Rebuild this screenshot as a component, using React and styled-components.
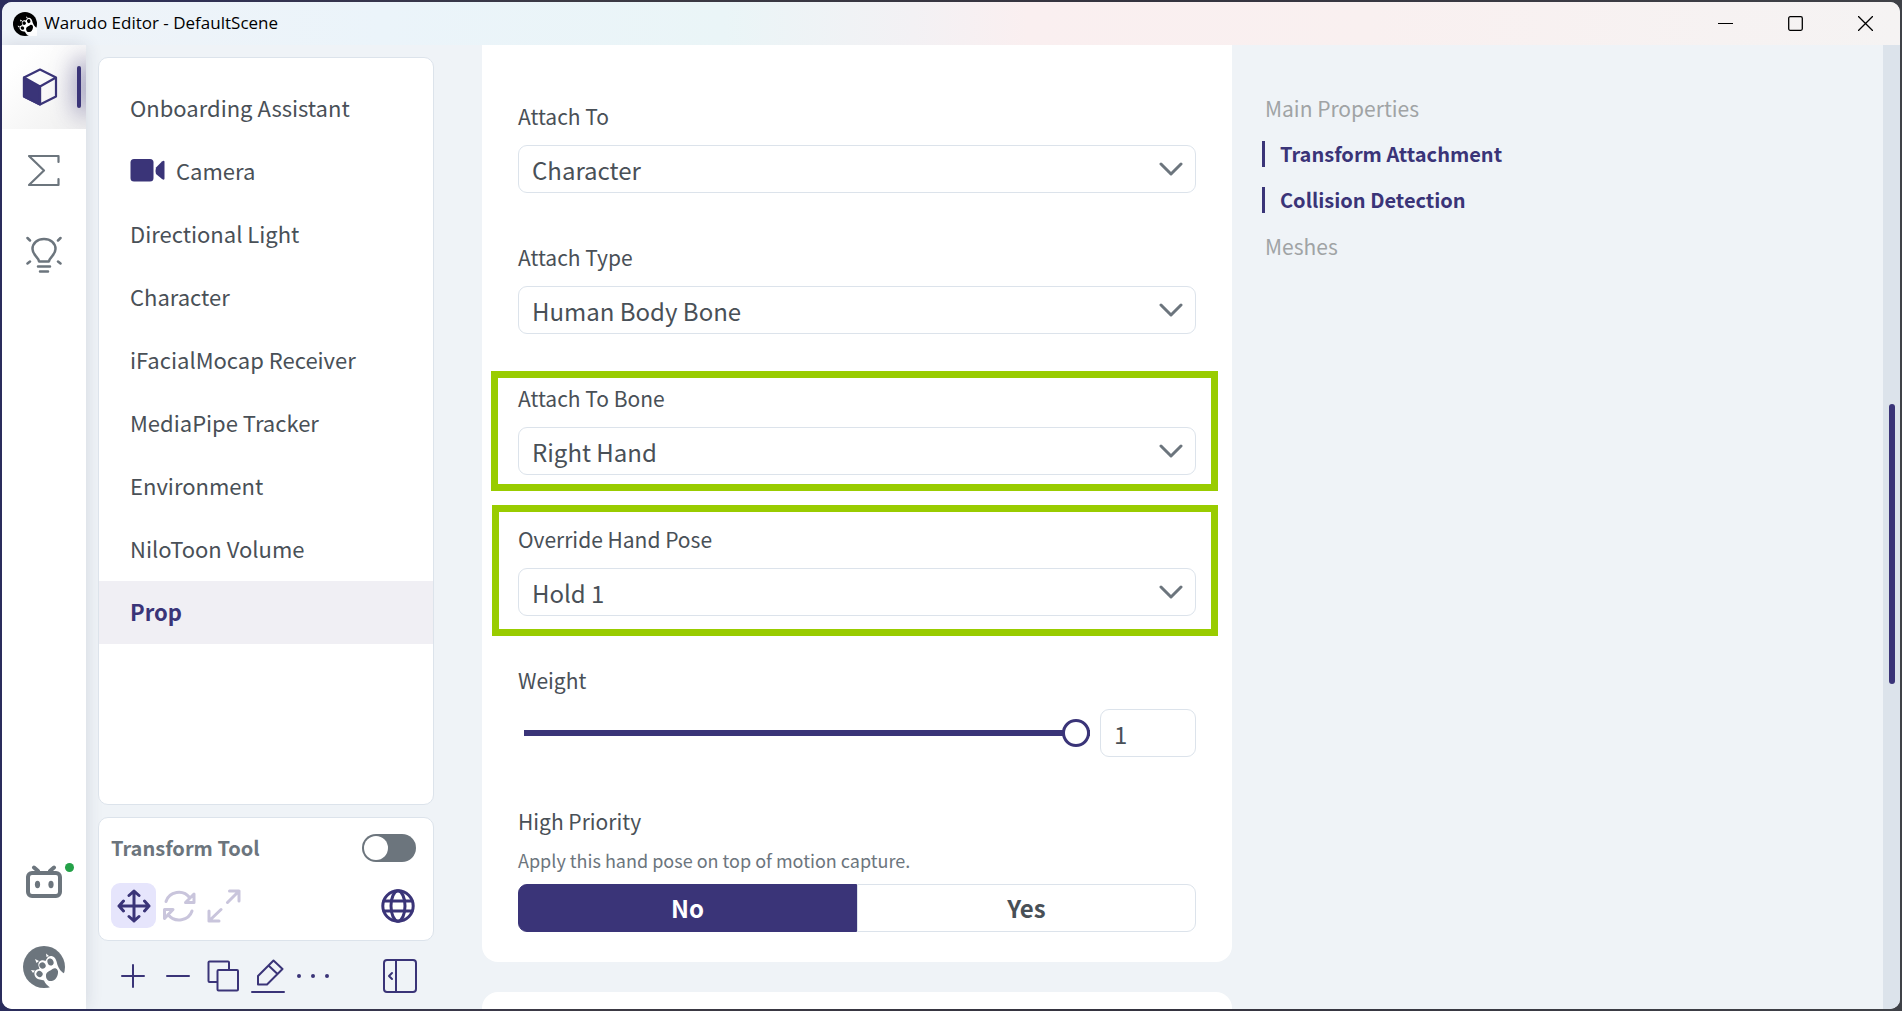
import { useState } from 'react';
import styled, { createGlobalStyle, css } from 'styled-components';

const COLORS = {
  primary: '#3a3478',
  text: '#495057',
  gray: '#6c757d',
  muted: '#a0a3a5',
  border: '#dce3eb',
  background: '#eff3f7',
  disabled: '#c9c5dc',
  highlight: '#99cc00',
};

const ASSETS = [
  { id: 'onboarding', name: 'Onboarding Assistant' },
  { id: 'camera', name: 'Camera', camera: true },
  { id: 'light', name: 'Directional Light' },
  { id: 'character', name: 'Character' },
  { id: 'ifacialmocap', name: 'iFacialMocap Receiver' },
  { id: 'mediapipe', name: 'MediaPipe Tracker' },
  { id: 'environment', name: 'Environment' },
  { id: 'nilotoon', name: 'NiloToon Volume' },
  { id: 'prop', name: 'Prop' },
];

const SECTIONS = [
  { id: 'main', name: 'Main Properties' },
  { id: 'transform', name: 'Transform Attachment', active: true },
  { id: 'collision', name: 'Collision Detection', active: true },
  { id: 'meshes', name: 'Meshes' },
];

const PawLogo = ({ size, color }) => (
  <svg width={size} height={size} viewBox="0 0 42 42" aria-hidden="true">
    <circle cx="21" cy="21" r="21" fill={color} />
    <path
      d="M42 28 C38 26 36 23 34.500 19 C33.500 15 33 11 28.500 10 C25 9.500 23.500 13 22.500 15 C19 13 14.500 15 15.500 20 L16.500 23 C12 23 10 27 12.500 31 C14.500 34 19 33.500 21 34.500 C22 38 25 40 28 42 L42 42 Z"
      fill="#fff"
    />
    <g fill={color}>
      <ellipse cx="27.500" cy="16" rx="3" ry="3.600" transform="rotate(-20 27.500 16)" />
      <ellipse cx="19.500" cy="19.500" rx="3" ry="3.300" transform="rotate(-40 19.500 19.500)" />
      <ellipse cx="16.500" cy="28" rx="3" ry="3.200" transform="rotate(-50 16.500 28)" />
      <path d="M23 30 C22.500 26 27 25 29.500 23 C33 21 35.500 24 35 27 C34.500 31 32 35 28.500 35 C25 35.500 23 33 23 30 Z" />
    </g>
    <path d="M8 24 L12 24.500 L10 27 Z M12 13 L16 15 L13.500 17 Z M23 7.500 L26 10 L23.500 11 Z" fill="#fff" />
  </svg>
);

const CubeIcon = () => (
  <svg width="36" height="40" viewBox="0 0 36 40" fill="none" stroke={COLORS.primary} strokeWidth="2.200" strokeLinejoin="round" aria-hidden="true">
    <path d="M18 2.500 L34 10.500 V29.500 L18 37.500 L2 29.500 V10.500 Z M18 19.500 L34 10.500 M18 19.500 V37.500" />
    <path d="M2 10.500 L18 19.500 V37.500 L2 29.500 Z" fill={COLORS.primary} />
  </svg>
);

const SigmaIcon = () => (
  <svg width="36" height="36" viewBox="0 0 36 36" fill="none" stroke={COLORS.gray} strokeWidth="2.200" strokeLinecap="round" strokeLinejoin="round" aria-hidden="true">
    <path d="M32.500 9 V3 H3 L18 17.500 L3 32 H32.500 V26" />
  </svg>
);

const BulbIcon = () => (
  <svg width="36" height="38" viewBox="0 0 36 38" fill="none" stroke={COLORS.gray} strokeWidth="2.500" strokeLinecap="round" strokeLinejoin="round" aria-hidden="true">
    <path d="M13 25.500 C12.500 20.500 6.500 19.500 6.500 13 C6.500 7 11.500 3 18 3 S29.500 7 29.500 13 C29.500 19.500 23.500 20.500 23 25.500 Z" />
    <path d="M12 30.500 H24 M14 35.500 H22 M1.500 2 L4 4.500 M34.500 2 L32 4.500 M1.500 27.500 L4 25.500 M34.500 27.500 L32 25.500" />
  </svg>
);

const BotIcon = () => (
  <svg width="38" height="36" viewBox="0 0 38 36" fill="none" stroke={COLORS.gray} strokeWidth="4" strokeLinecap="round" aria-hidden="true">
    <rect x="3" y="8" width="32" height="23" rx="4" />
    <path d="M9 2.500 L13 6 M29 2.500 L25 6" />
    <g fill={COLORS.gray} stroke="none">
      <ellipse cx="12.500" cy="19.500" rx="2.600" ry="3.700" />
      <ellipse cx="26" cy="19.500" rx="2.600" ry="3.700" />
    </g>
  </svg>
);

const CameraIcon = () => (
  <svg width="35" height="24" viewBox="0 0 35 24" fill={COLORS.primary} aria-hidden="true">
    <rect x="0.500" y="1" width="23" height="22.500" rx="3.500" />
    <path d="M26 9.500 L32 3.500 Q34.500 2 34.500 4 V20.500 Q34.500 22.500 32 21 L26 16 Q25 13 26 9.500 Z" />
  </svg>
);

const Stroked = ({ children, width = 3, size = 34 }) => (
  <svg width={size} height={size} viewBox="0 0 34 34" fill="none" stroke="currentColor" strokeWidth={width} strokeLinecap="round" strokeLinejoin="round" aria-hidden="true">
    {children}
  </svg>
);

const App = () => {
  const [asset, setAsset] = useState('prop');
  const [priority, setPriority] = useState('no');
  const [weight, setWeight] = useState(1);

  return (
    <>
      <GlobalStyle />
      <Desktop>
        <Window>
          <TitleBar>
            <PawLogo size={24} color="#000" />
            <Title>Warudo Editor - DefaultScene</Title>
            <WindowButton aria-label="Minimize">
              <svg width="15" height="15" viewBox="0 0 15 15" stroke="#000"><path d="M0 7.500 H15" /></svg>
            </WindowButton>
            <WindowButton aria-label="Maximize">
              <svg width="15" height="15" viewBox="0 0 15 15" fill="none" stroke="#000" strokeWidth="1.300"><rect x="0.700" y="0.700" width="13.600" height="13.600" rx="1.500" /></svg>
            </WindowButton>
            <WindowButton aria-label="Close">
              <svg width="15" height="15" viewBox="0 0 15 15" stroke="#000" strokeWidth="1.300"><path d="M0 0 L15 15 M15 0 L0 15" /></svg>
            </WindowButton>
          </TitleBar>

          <Body>
            <Rail>
              <RailButton $active aria-label="Assets"><CubeIcon /></RailButton>
              <RailButton aria-label="Blueprints"><SigmaIcon /></RailButton>
              <RailButton aria-label="Discover"><BulbIcon /></RailButton>
              <RailSpacer />
              <RailButton aria-label="Streaming platforms">
                <BotIcon />
                <StatusDot />
              </RailButton>
              <RailButton aria-label="Menu"><PawLogo size={42} color={COLORS.gray} /></RailButton>
            </Rail>

            <Sidebar>
              <AssetList>
                {ASSETS.map(({ id, name, camera }) => (
                  <AssetItem key={id} $active={id === asset} onClick={() => setAsset(id)}>
                    {camera && <CameraIcon />}
                    {name}
                  </AssetItem>
                ))}
              </AssetList>

              <TransformPanel>
                <PanelRow>
                  <PanelTitle htmlFor="transform-tool">Transform Tool</PanelTitle>
                  <Switch id="transform-tool" type="checkbox" />
                </PanelRow>
                <PanelRow>
                  <ToolGroup>
                    <ToolButton $active aria-label="Move">
                      <Stroked>
                        <path d="M17 2 V32 M2 17 H32 M12 6.500 L17 2 L22 6.500 M12 27.500 L17 32 L22 27.500 M6.500 12 L2 17 L6.500 22 M27.500 12 L32 17 L27.500 22" />
                      </Stroked>
                    </ToolButton>
                    <ToolButton disabled aria-label="Rotate">
                      <Stroked>
                        <path d="M4 12.500 C7 2.500 21 -0.500 28 9 M32 5 V13.500 H23.500 Z M30 22 C27 31.500 13 34.500 6 25.500 M2.500 29.500 V20.500 H11 Z" />
                      </Stroked>
                    </ToolButton>
                    <ToolButton disabled aria-label="Scale">
                      <Stroked>
                        <path d="M22.500 2 H32 V12 M32 2 L20.500 13.500 M2 22 V32 H12 M2 32 L14 20.500" />
                      </Stroked>
                    </ToolButton>
                  </ToolGroup>
                  <EndButton aria-label="World space">
                    <Stroked>
                      <circle cx="17" cy="17" r="15.200" />
                      <ellipse cx="17" cy="17" rx="7" ry="15.200" />
                      <path d="M3 12 H31 M3 22 H31" />
                    </Stroked>
                  </EndButton>
                </PanelRow>
              </TransformPanel>

              <Toolbar>
                <ToolGroup>
                  <ToolButton aria-label="Add"><Stroked width={2}><path d="M17 6 V28 M6 17 H28" /></Stroked></ToolButton>
                  <ToolButton aria-label="Remove"><Stroked width={2}><path d="M6 17 H28" /></Stroked></ToolButton>
                  <ToolButton aria-label="Duplicate">
                    <Stroked width={2}>
                      <rect x="2.500" y="2.500" width="20.500" height="20.500" rx="1" />
                      <rect x="11.500" y="11" width="20.500" height="20.500" rx="1" fill={COLORS.background} />
                    </Stroked>
                  </ToolButton>
                  <ToolButton aria-label="Rename">
                    <Stroked width={2}>
                      <path d="M7 25.500 V17 L22.500 1.500 L31.500 10 L16 25.500 Z M17.500 6.500 L26.500 15 M1 33 H33" />
                    </Stroked>
                  </ToolButton>
                  <ToolButton aria-label="More">
                    <Stroked width={4}><path d="M3 17 H3 M17 17 H17 M31 17 H31" /></Stroked>
                  </ToolButton>
                </ToolGroup>
                <EndButton aria-label="Collapse sidebar">
                  <Stroked width={2}>
                    <rect x="1" y="1" width="32" height="32" rx="3" />
                    <path d="M13 1 V33 M9 14 L6 17 L9 20" />
                  </Stroked>
                </EndButton>
              </Toolbar>
            </Sidebar>

            <Content>
              <FormCard>
                <SelectField id="attach-to" label="Attach To" value="Character" />
                <SelectField id="attach-type" label="Attach Type" value="Human Body Bone" />
                <SelectField id="attach-bone" label="Attach To Bone" value="Right Hand" highlight="tight" />
                <SelectField id="hand-pose" label="Override Hand Pose" value="Hold 1" highlight="loose" />
                <Field>
                  <Label htmlFor="weight">Weight</Label>
                  <SliderRow>
                    <Slider
                      id="weight"
                      type="range"
                      min="0"
                      max="1"
                      step="0.01"
                      value={weight}
                      onChange={(e) => setWeight(Number(e.target.value))}
                    />
                    <NumberInput
                      aria-label="Weight value"
                      value={weight}
                      onChange={(e) => setWeight(Number(e.target.value) || 0)}
                    />
                  </SliderRow>
                </Field>
                <Field role="group" aria-labelledby="priority-label">
                  <Label as="span" id="priority-label">High Priority</Label>
                  <Description>Apply this hand pose on top of motion capture.</Description>
                  <ButtonGroup>
                    <Choice $active={priority === 'no'} onClick={() => setPriority('no')}>No</Choice>
                    <Choice $active={priority === 'yes'} onClick={() => setPriority('yes')}>Yes</Choice>
                  </ButtonGroup>
                </Field>
              </FormCard>
              <NextCard />
            </Content>

            <SectionNav>
              {SECTIONS.map(({ id, name, active }) => (
                <SectionLink key={id} href={`#${id}`} $active={active}>{name}</SectionLink>
              ))}
            </SectionNav>

            <ScrollTrack>
              <ScrollThumb />
            </ScrollTrack>
          </Body>
        </Window>
      </Desktop>
    </>
  );
};

const SelectField = ({ id, label, value, highlight }) => (
  <Field>
    <Label htmlFor={id}>{label}</Label>
    <SelectWrapper>
      <Select id={id} defaultValue={value}>
        <option>{value}</option>
      </Select>
      <Chevron width="24" height="14" viewBox="0 0 24 14" aria-hidden="true">
        <path d="M2 2 L12 12 L22 2" />
      </Chevron>
    </SelectWrapper>
    {highlight && <Highlight $loose={highlight === 'loose'} />}
  </Field>
);

const GlobalStyle = createGlobalStyle`
  *, *::before, *::after {
    box-sizing: border-box;
  }

  body {
    margin: 0;
    color: ${COLORS.text};
    font-family: 'Noto Sans CJK SC', 'Noto Sans', sans-serif;
    font-size: 22px;
  }

  button, input, select {
    font: inherit;
    color: inherit;
  }

  button {
    border: none;
    padding: 0;
    background: none;
    cursor: pointer;
  }
`;

const Desktop = styled.div`
  height: 100vh;
  padding: 2px;
  background: linear-gradient(90deg, #2a2c5c, #3c3a44 30%, #34333f 60%, #3f4147);
`;

const Window = styled.div`
  display: flex;
  flex-direction: column;
  height: 100%;
  border-radius: 10px;
  background: ${COLORS.background};
  overflow: hidden;
`;

const TitleBar = styled.header`
  display: flex;
  align-items: center;
  flex: 0 0 43px;
  padding-left: 11px;
  color: #000;
  background: linear-gradient(90deg, #eff3f8, #ebf4fa 20%, #eaf5f7 38%, #f3f1f4 48%, #faeff0 54%, #f9f0f0 72%, #f5f3f3);
`;

const Title = styled.h1`
  flex: 1;
  margin: 0 0 0 7px;
  padding-bottom: 2px;
  font-family: 'Open Sans', 'Noto Sans', sans-serif;
  font-size: 17px;
  font-weight: 400;
`;

const WindowButton = styled.button`
  display: grid;
  place-items: center;
  width: 70px;
  height: 100%;
`;

const Body = styled.div`
  display: grid;
  grid-template-columns: 84px 348px minmax(480px, 798px) minmax(240px, 1fr) 17px;
  flex: 1;
  min-height: 0;
`;

const Rail = styled.nav`
  display: flex;
  flex-direction: column;
  background: #fff;
  box-shadow: 0 0 16px rgba(40, 50, 80, 0.14);
`;

const RailButton = styled.button`
  position: relative;
  display: grid;
  place-items: center;
  height: 84px;
  overflow: hidden;

  ${({ $active }) => $active && css`
    padding-right: 8px;
    background: linear-gradient(135deg, #fff 20%, #efefef);

    &::after {
      content: '';
      position: absolute;
      top: 21px;
      right: 5px;
      width: 4px;
      height: 42px;
      border-radius: 2px;
      background: ${COLORS.primary};
      box-shadow: 6px 0 24px 6px rgba(58, 52, 120, 0.6);
    }
  `}
`;

const RailSpacer = styled.div`
  flex: 1;
`;

const StatusDot = styled.span`
  position: absolute;
  top: 22px;
  right: 12px;
  width: 9px;
  height: 9px;
  border-radius: 50%;
  background: #24a148;
`;

const Sidebar = styled.aside`
  display: flex;
  flex-direction: column;
  min-height: 0;
  padding: 12px 0 0 12px;
`;

const Panel = styled.div`
  border: 1px solid ${COLORS.border};
  border-radius: 10px;
  background: #fff;
`;

const AssetList = styled(Panel)`
  display: flex;
  flex-direction: column;
  flex: 1;
  min-height: 0;
  padding: 19px 0;
  overflow: hidden;
`;

const AssetItem = styled.button`
  display: flex;
  align-items: center;
  gap: 11px;
  flex: 0 0 63px;
  padding: 0 31px 4px;
  font-weight: ${({ $active }) => ($active ? 700 : 400)};
  color: ${({ $active }) => ($active ? COLORS.primary : COLORS.text)};
  background: ${({ $active }) => ($active ? '#f0eff4' : 'transparent')};
`;

const TransformPanel = styled(Panel)`
  display: grid;
  gap: 21px;
  margin-top: 12px;
  padding: 16px 17px 12px 12px;
`;

const PanelRow = styled.div`
  display: flex;
  align-items: center;
  justify-content: space-between;
`;

const PanelTitle = styled.label`
  font-size: 20px;
  line-height: 28px;
  font-weight: 700;
  color: ${COLORS.gray};
`;

const Switch = styled.input`
  appearance: none;
  display: flex;
  width: 54px;
  height: 28px;
  margin: 0;
  padding: 2px;
  border-radius: 14px;
  background: ${COLORS.gray};

  &::before {
    content: '';
    width: 24px;
    height: 24px;
    border-radius: 50%;
    background: #fff;
  }

  &:checked {
    justify-content: flex-end;
    background: ${COLORS.primary};
  }
`;

const ToolGroup = styled.div`
  display: flex;
`;

const ToolButton = styled.button`
  display: grid;
  place-items: center;
  width: 45px;
  height: 45px;
  border-radius: 9px;
  color: ${COLORS.primary};
  background: ${({ $active }) => ($active ? '#e6e5fc' : 'transparent')};

  &:disabled {
    color: ${COLORS.disabled};
  }
`;

const EndButton = styled.button`
  display: grid;
  place-items: center;
  width: 36px;
  height: 36px;
  color: ${COLORS.primary};
`;

const Toolbar = styled.div`
  display: flex;
  align-items: center;
  justify-content: space-between;
  flex: 0 0 68px;
  padding: 2px 16px 0 12px;
`;

const Content = styled.main`
  min-width: 0;
  padding-left: 48px;
  overflow: hidden;
`;

const FormCard = styled.div`
  display: grid;
  gap: 51px;
  padding: 58px 36px 30px;
  border-radius: 0 0 16px 16px;
  background: #fff;
`;

const NextCard = styled.div`
  height: 120px;
  margin-top: 30px;
  border-radius: 16px;
  background: #fff;
`;

const Field = styled.div`
  position: relative;
`;

const Label = styled.label`
  display: block;
  margin-bottom: 16px;
  font-size: 21px;
  line-height: 26px;
`;

const Description = styled.p`
  margin: 0 0 14px;
  font-size: 18px;
  line-height: 20px;
  color: ${COLORS.gray};
`;

const SelectWrapper = styled.div`
  position: relative;
`;

const controlStyles = css`
  height: 48px;
  padding: 0 13px;
  border: 1px solid ${COLORS.border};
  border-radius: 9px;
  background: #fff;
  font-size: 24px;
`;

const Select = styled.select`
  ${controlStyles}
  appearance: none;
  display: block;
  width: 100%;
`;

const Chevron = styled.svg`
  position: absolute;
  top: 17px;
  right: 13px;
  fill: none;
  stroke: ${COLORS.gray};
  stroke-width: 3px;
  stroke-linecap: round;
  stroke-linejoin: round;
  pointer-events: none;
`;

const Highlight = styled.div`
  position: absolute;
  inset: ${({ $loose }) => ($loose ? '-21px -22px -20px -26px' : '-14px -22px -16px -27px')};
  border: 7px solid ${COLORS.highlight};
  pointer-events: none;
`;

const SliderRow = styled.div`
  display: flex;
  align-items: center;
  gap: 10px;
`;

const Slider = styled.input`
  appearance: none;
  flex: 1;
  min-width: 0;
  height: 28px;
  margin: 0 0 0 6px;
  background: linear-gradient(${COLORS.primary}, ${COLORS.primary}) center / 100% 6px no-repeat;

  &::-webkit-slider-thumb {
    appearance: none;
    width: 28px;
    height: 28px;
    border: 3px solid ${COLORS.primary};
    border-radius: 50%;
    background: #fff;
  }
`;

const NumberInput = styled.input`
  ${controlStyles}
  width: 96px;
`;

const ButtonGroup = styled.div`
  display: grid;
  grid-template-columns: 1fr 1fr;
  height: 48px;
`;

const Choice = styled.button`
  border: 1px solid ${({ $active }) => ($active ? COLORS.primary : COLORS.border)};
  font-size: 24px;
  line-height: 1;
  font-weight: 700;
  color: ${({ $active }) => ($active ? '#fff' : COLORS.text)};
  background: ${({ $active }) => ($active ? COLORS.primary : '#fff')};

  &:first-child {
    border-radius: 9px 0 0 9px;
  }

  &:last-child {
    border-radius: 0 9px 9px 0;
  }
`;

const SectionNav = styled.nav`
  display: flex;
  flex-direction: column;
  align-items: flex-start;
  gap: 20px;
  padding: 50px 30px;
`;

const SectionLink = styled.a`
  padding-left: 3px;
  font-size: 21px;
  line-height: 26px;
  color: ${COLORS.muted};
  text-decoration: none;

  ${({ $active }) => $active && css`
    padding-left: 15px;
    border-left: 3px solid ${COLORS.primary};
    font-size: 20px;
    font-weight: 700;
    color: ${COLORS.primary};
  `}
`;

const ScrollTrack = styled.div`
  display: grid;
  grid-template-rows: 359fr 280fr 325fr;
  justify-items: center;
  background: ${COLORS.border};
`;

const ScrollThumb = styled.div`
  grid-row: 2;
  width: 6px;
  border-radius: 3px;
  background: ${COLORS.primary};
`;

export default App;
